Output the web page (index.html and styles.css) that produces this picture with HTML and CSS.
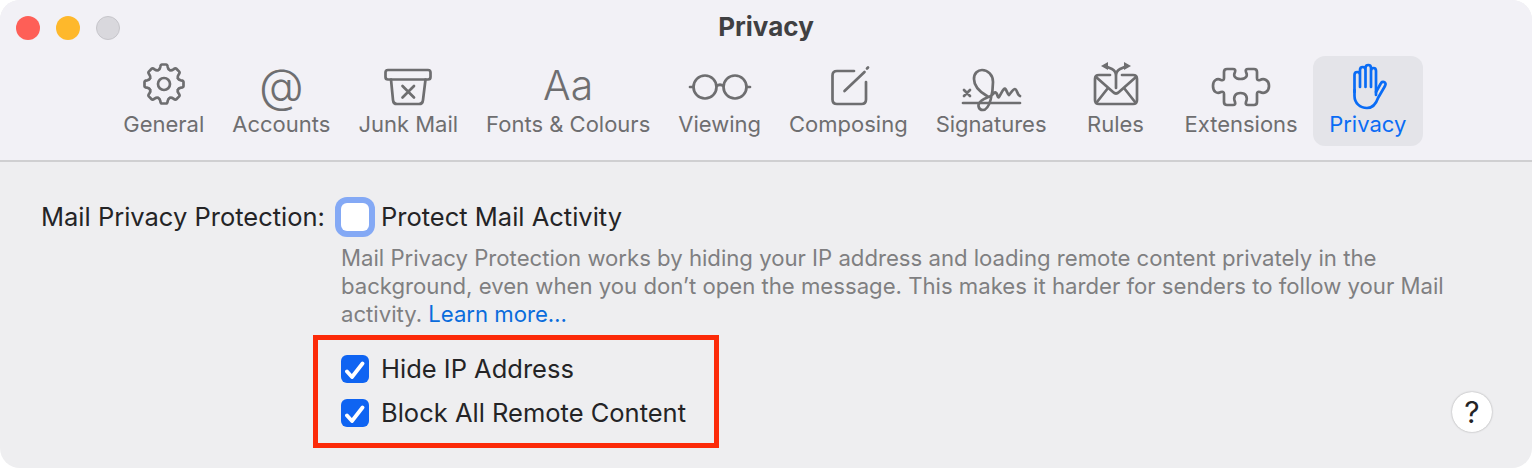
FILE: index.html
```html
<!DOCTYPE html>
<html lang="en">
<head>
  <meta charset="UTF-8" />
  <title>Privacy</title>
  <link rel="stylesheet" href="styles.css">
</head>
<body>
  <div class="window">
    <header class="titlebar">
      <div class="title-row">
        <div class="lights">
          <span class="light red"></span>
          <span class="light yellow"></span>
          <span class="light grey"></span>
        </div>
        <div class="title">Privacy</div>
      </div>

      <nav class="toolbar">
        <div class="tool">
          <svg class="icon" width="48" height="50" viewBox="0 0 48 50">
            <defs>
              <path id="tooth" d="M18.300 10.100C19.600 9.600 20 9 20.300 7Q20.600 4.500 22 4.500H26Q27.400 4.500 27.700 7C28 9 28.400 9.600 29.700 10.100"/>
            </defs>
            <g class="line">
              <use href="#tooth"/>
              <use href="#tooth" transform="rotate(45 24 24)"/>
              <use href="#tooth" transform="rotate(90 24 24)"/>
              <use href="#tooth" transform="rotate(135 24 24)"/>
              <use href="#tooth" transform="rotate(180 24 24)"/>
              <use href="#tooth" transform="rotate(225 24 24)"/>
              <use href="#tooth" transform="rotate(270 24 24)"/>
              <use href="#tooth" transform="rotate(315 24 24)"/>
              <circle cx="24" cy="24" r="6"/>
            </g>
          </svg>
          <span>General</span>
        </div>
        <div class="tool">
          <span class="icon glyph at">@</span>
          <span>Accounts</span>
        </div>
        <div class="tool">
          <svg class="icon" width="50" height="50" viewBox="0 0 50 50">
            <g class="line">
              <rect x="2.500" y="10" width="45" height="9.500" rx="2.500"/>
              <path d="M8 19.500L10 40Q10.400 44 14 44H36Q39.600 44 40 40L42.500 19.500"/>
              <path d="M19.500 26L31 37.500M31 26L19.500 37.500"/>
            </g>
          </svg>
          <span>Junk Mail</span>
        </div>
        <div class="tool">
          <span class="icon glyph aa">Aa</span>
          <span>Fonts &amp; Colours</span>
        </div>
        <div class="tool">
          <svg class="icon" width="64" height="50" viewBox="0 0 64 50">
            <g class="line">
              <circle cx="17" cy="27" r="11.500"/>
              <circle cx="47" cy="27" r="11.500"/>
              <path d="M28.500 26Q32 23.500 35.500 26M2 27H5.500M58.500 27H62"/>
            </g>
          </svg>
          <span>Viewing</span>
        </div>
        <div class="tool">
          <svg class="icon" width="44" height="50" viewBox="0 0 44 50">
            <g class="line">
              <path d="M28 11H11Q6.500 11 6.500 15.500V39.500Q6.500 44 11 44H35.500Q40 44 40 39.500V22"/>
              <path d="M18.500 31L38.500 12"/>
              <path d="M41 8.500L42 7.500"/>
            </g>
          </svg>
          <span>Composing</span>
        </div>
        <div class="tool">
          <svg class="icon" width="62" height="50" viewBox="0 0 62 50">
            <g class="line">
              <path d="M3 43H60"/>
              <path d="M4 30L10 36M10 30L4 36"/>
              <path d="M27 36C20 32 14 26 14 19C14 13 18 10 22 10C28 10 33 15 33 22C33 32 30 50 23 50C18 50 17 44 21 41C26 37 32 37 34 33C36 31 37 34 38 37C39 39 41 32 44 29C46 27 47 34 49 35C51 33 53 29 55 29C57 29 57 35 60 36"/>
            </g>
          </svg>
          <span>Signatures</span>
        </div>
        <div class="tool wide">
          <svg class="icon" width="46" height="50" viewBox="0 0 46 50">
            <g class="line">
              <path d="M17 15H6Q2 15 2 19V40Q2 44 6 44H40Q44 44 44 40V19Q44 15 40 15H29"/>
              <path d="M4 42L15 28M42 42L31 28M3 17L20 32Q23 35 26 32L43 17"/>
              <path d="M23 28V16Q23 11 19 9L12 6M23 16Q23 11 27 9L34 6"/>
            </g>
            <path class="fill" d="M8 6L15 2V10ZM38 6L31 2V10Z"/>
          </svg>
          <span>Rules</span>
        </div>
        <div class="tool">
          <svg class="icon" width="60" height="50" viewBox="0 0 60 50">
            <path class="line" d="M13 12Q13 9 16 9H22Q25 9 24 12C22 16 24 19 29.500 19C35 19 37 16 35 12Q34 9 37 9H43Q46 9 46 12V18Q46 21 49 20C53 18 58 20 58 26C58 32 53 34 49 32Q46 31 46 34V42Q46 45 43 45H37Q34 45 35 42C37 37 35 33 29.500 33C24 33 22 37 24 42Q25 45 22 45H16Q13 45 13 42V34Q13 31 10 32C6 34 2 32 2 26C2 20 6 18 10 20Q13 21 13 18Z"/>
          </svg>
          <span>Extensions</span>
        </div>
        <div class="tool active">
          <svg class="icon" width="42" height="50" viewBox="0 0 42 50">
            <g class="line blue">
              <path d="M7.500 32V15Q7.500 12 10.200 12Q13 12 13 15V27M13 15V10Q13 7 15.800 7Q18.500 7 18.500 10V27M18.500 10V8Q18.500 5 21.300 5Q24 5 24 8V27M24 11Q24 8 26.600 8Q29 8 29 11V35"/>
              <path d="M7.500 30V36C7.500 43 13 48 20 48C26 48 29 44 31 38L38 26Q39.500 23 37 22Q35 21 33.500 24L29 32"/>
            </g>
          </svg>
          <span>Privacy</span>
        </div>
      </nav>
    </header>

    <main class="content">
      <div class="row top">
        <div class="label">Mail Privacy Protection:</div>
        <div class="check-row">
          <span class="box focused"></span>
          <span>Protect Mail Activity</span>
        </div>
      </div>
      <p class="desc">Mail Privacy Protection works by hiding your IP address and loading remote content privately in the<br>background, even when you don’t open the message. This makes it harder for senders to follow your Mail<br>activity. <a href="#">Learn more…</a></p>
      <div class="options">
        <div class="check-row">
          <span class="box checked">
            <svg width="20" height="20" viewBox="0 0 20 20"><path d="M2 12.500L7 18L17.500 4.500"/></svg>
          </span>
          <span>Hide IP Address</span>
        </div>
        <div class="check-row">
          <span class="box checked">
            <svg width="20" height="20" viewBox="0 0 20 20"><path d="M2 12.500L7 18L17.500 4.500"/></svg>
          </span>
          <span>Block All Remote Content</span>
        </div>
      </div>

      <!-- annotation on top of the screenshot -->
      <div class="highlight"></div>
      <button class="help">?</button>
    </main>
  </div>
</body>
</html>
```

FILE: styles.css
```css
* { box-sizing: border-box; }
body {
  margin: 0;
  background: white;
  font-family: Inter, "Liberation Sans", sans-serif;
  color: #242426;
}
.window {
  position: relative;
  display: flex;
  flex-direction: column;
  width: 1532px;
  height: 468px;
  border-radius: 20px;
  overflow: hidden;
  background: #eeeef0;
}
.titlebar {
  height: 162px;
  background: #f2f1f6;
  border-bottom: 2px solid #cfcfd1;
}
.title-row {
  position: relative;
  height: 56px;
}
.lights {
  position: absolute;
  left: 16px;
  top: 16px;
  display: flex;
  gap: 16px;
}
.light {
  width: 24px;
  height: 24px;
  border-radius: 50%;
}
.red { background: #fe5f57; }
.yellow { background: #feb82b; }
.grey { background: #d9d8dd; border: 1px solid #c6c5ca; }
.title {
  padding-top: 11px;
  text-align: center;
  font-size: 26px;
  line-height: 32px;
  font-weight: 700;
  color: #404042;
}
.toolbar {
  display: flex;
  justify-content: center;
}
.tool {
  display: flex;
  flex-direction: column;
  align-items: center;
  height: 90px;
  padding: 4px 14px 0;
  font-size: 22px;
  line-height: 28px;
  color: #6e6e70;
  border-radius: 12px;
}
.tool.wide { width: 110px; }
.tool.active {
  width: 110px;
  margin-left: 1px;
  background: #e4e4e9;
  color: #0a6cf5;
}
.icon {
  display: block;
  height: 50px;
  flex: none;
  overflow: visible;
}
.glyph {
  line-height: 50px;
  color: #6e6e70;
}
.at { font-size: 46px; font-weight: 300; }
.aa { font-size: 41px; font-weight: 300; }
.line {
  fill: none;
  stroke: #6e6e70;
  stroke-width: 2.700;
  stroke-linecap: round;
  stroke-linejoin: round;
}
.line.blue { stroke: #0a6cf5; }
.fill { fill: #6e6e70; }
.content {
  position: relative;
  flex: 1;
  padding: 33px 0 0 41px;
  font-size: 25.500px;
  line-height: 44px;
}
.row {
  display: flex;
}
.label {
  width: 284px;
  margin-right: 16px;
}
.check-row {
  display: flex;
  align-items: center;
  gap: 12px;
  height: 44px;
}
.box {
  display: flex;
  align-items: center;
  justify-content: center;
  flex: none;
  width: 28px;
  height: 28px;
  border-radius: 6px;
}
.box.focused {
  background: white;
  box-shadow: 0 0 0 6px #84a9f5;
}
.box.checked { background: #0f64f2; }
.box svg path {
  fill: none;
  stroke: white;
  stroke-width: 3.800;
  stroke-linecap: round;
  stroke-linejoin: round;
}
.desc {
  margin: 5px 0 0 300px;
  font-size: 22.150px;
  line-height: 28px;
  color: #7f7f81;
  white-space: nowrap;
}
.desc a {
  color: #0a6cdc;
  text-decoration: none;
}
.options {
  margin: 19px 0 0 300px;
}
.highlight {
  position: absolute;
  left: 313px;
  top: 173px;
  width: 406px;
  height: 113px;
  border: 5px solid #fc2a08;
}
.help {
  position: absolute;
  left: 1452px;
  top: 230px;
  width: 40px;
  height: 40px;
  padding: 0;
  border: none;
  border-radius: 50%;
  background: white;
  box-shadow: 0 0 2px rgba(0, 0, 0, 0.35);
  font-family: inherit;
  font-size: 30px;
  font-weight: 400;
  color: #242426;
}
```
